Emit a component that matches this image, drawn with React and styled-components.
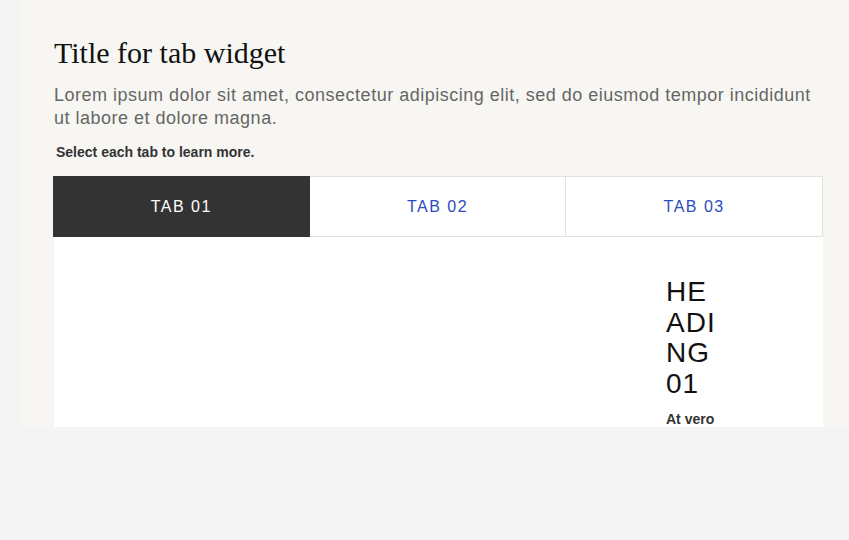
import React, { useState } from "react";
import styled, { createGlobalStyle } from "styled-components";

const tabs = [
  { id: 1, label: "TAB 01", heading: "HEADING 01", text: "At vero" },
  { id: 2, label: "TAB 02", heading: "HEADING 02", text: "Nam libero" },
  { id: 3, label: "TAB 03", heading: "HEADING 03", text: "Temporibus" },
];

const App = () => {
  const [active, setActive] = useState(1);
  const current = tabs.find((t) => t.id === active);

  return (
    <>
      <GlobalStyle />
      <Panel>
        <Title>Title for tab widget</Title>
        <Intro>
          Lorem ipsum dolor sit amet, consectetur adipiscing elit, sed do
          eiusmod tempor incididunt ut labore et dolore magna.
        </Intro>
        <Hint>Select each tab to learn more.</Hint>
        <TabList role="tablist">
          {tabs.map((tab) => (
            <Tab
              key={tab.id}
              role="tab"
              $active={tab.id === active}
              onClick={() => setActive(tab.id)}
            >
              {tab.label}
            </Tab>
          ))}
        </TabList>
        <TabPanel role="tabpanel">
          <Media />
          <TextCol>
            <Heading>{current.heading}</Heading>
            <Body>{current.text}</Body>
          </TextCol>
        </TabPanel>
      </Panel>
    </>
  );
};
export default App;

const GlobalStyle = createGlobalStyle`
  body {
    margin: 0;
    background: #f4f4f4;
    font-family: "Liberation Sans", Arial, sans-serif;
  }
`;

const Panel = styled.div`
  margin-left: 21px;
  height: 427px;
  overflow: hidden;
  box-sizing: border-box;
  padding: 35px 26px 0 32px;
  background: #f7f6f3;
`;

const Title = styled.h2`
  margin: 0 0 0 1px;
  font-family: "Liberation Serif", "Times New Roman", serif;
  font-size: 30px;
  font-weight: normal;
  line-height: 36px;
  color: #111;
`;

const Intro = styled.p`
  margin: 13px 0 0 1px;
  font-size: 18px;
  letter-spacing: 0.5px;
  line-height: 23px;
  color: #666;
`;

const Hint = styled.p`
  margin: 14px 0 15px;
  padding-left: 3px;
  font-size: 14px;
  font-weight: bold;
  line-height: 17px;
  color: #333;
`;

const TabList = styled.div`
  display: grid;
  grid-template-columns: repeat(3, 1fr);
`;

const Tab = styled.button`
  height: 61px;
  box-sizing: border-box;
  display: flex;
  align-items: center;
  justify-content: center;
  border: 1px solid #e1e1e1;
  border-left: none;
  background: ${(p) => (p.$active ? "#333" : "#fff")};
  border-color: ${(p) => (p.$active ? "#333" : "#e1e1e1")};
  color: ${(p) => (p.$active ? "#fff" : "#2c4dbd")};
  font-family: "Liberation Sans", Arial, sans-serif;
  font-size: 16px;
  letter-spacing: 1.5px;
  cursor: pointer;
  padding: 0;

  &:first-child {
    border-left: 1px solid ${(p) => (p.$active ? "#333" : "#e1e1e1")};
  }
`;

const TabPanel = styled.div`
  display: flex;
  height: 190px;
  margin-left: 1px;
  overflow: hidden;
  background: #fff;
`;

const Media = styled.div`
  flex: 1;
`;

const TextCol = styled.div`
  width: 54px;
  margin-right: 103px;
  padding-top: 40px;
`;

const Heading = styled.h3`
  margin: 0;
  font-size: 28px;
  font-weight: normal;
  letter-spacing: 1px;
  line-height: 30.5px;
  color: #111;
  word-break: break-all;
`;

const Body = styled.p`
  margin: 12px 0 0;
  font-size: 14px;
  font-weight: bold;
  line-height: 17px;
  color: #333;
`;
